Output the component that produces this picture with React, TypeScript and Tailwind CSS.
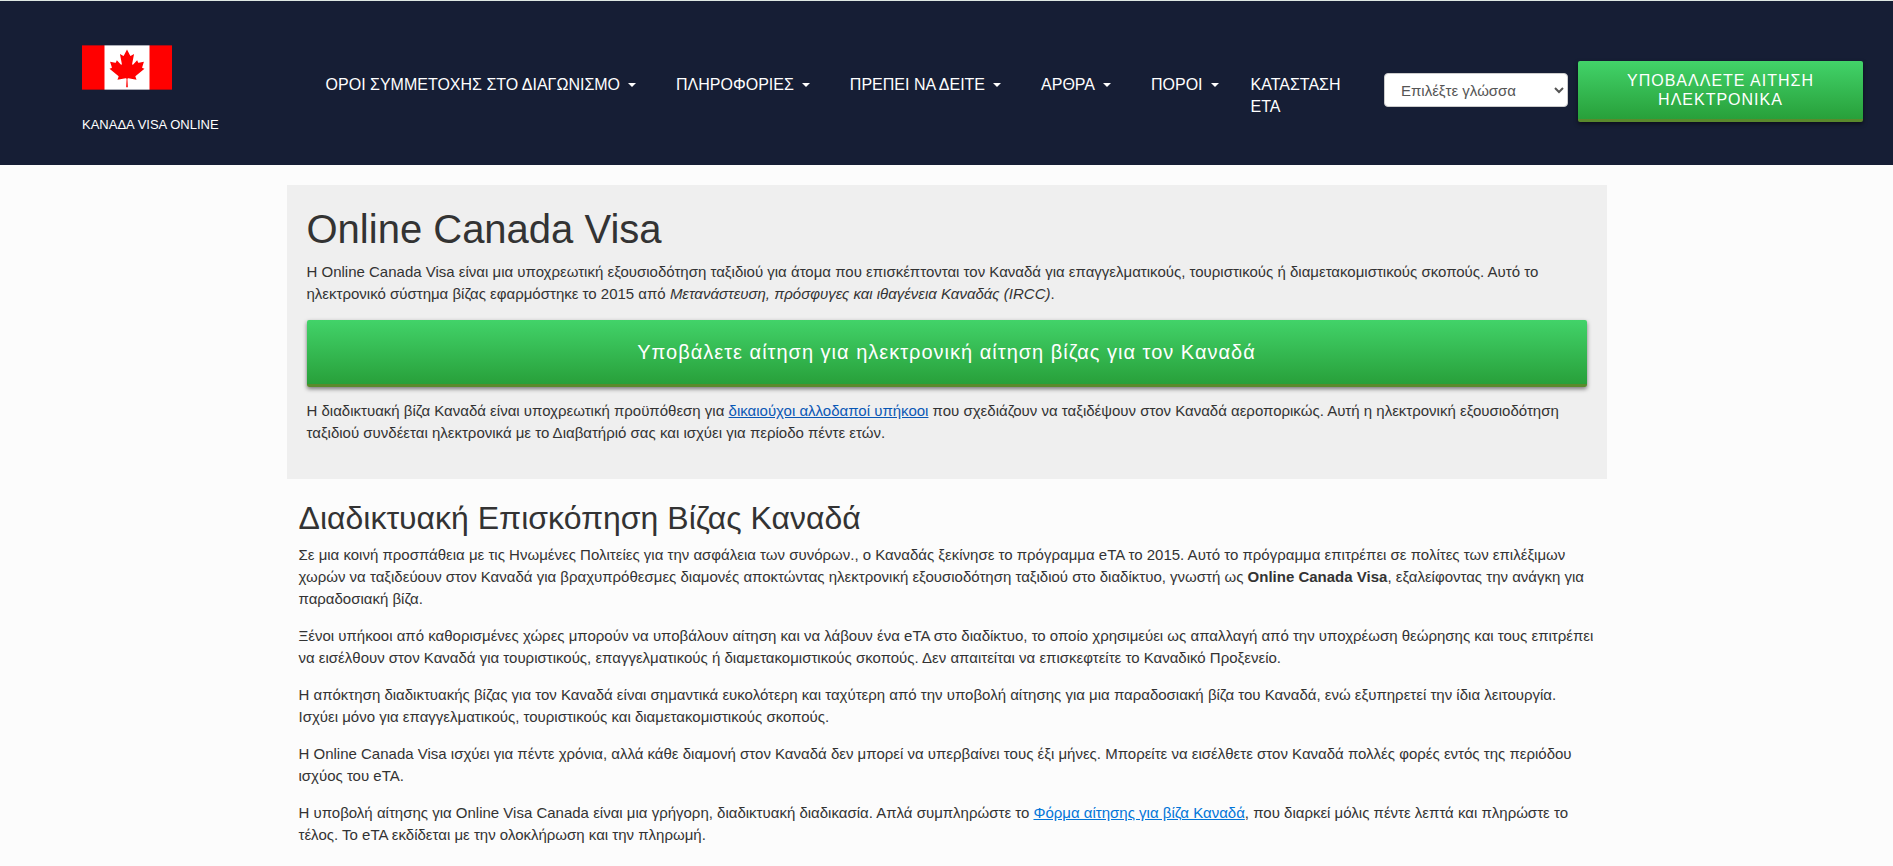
import { useState } from "react";

const menuItems = [
  "ΟΡΟΙ ΣΥΜΜΕΤΟΧΗΣ ΣΤΟ ΔΙΑΓΩΝΙΣΜΟ",
  "ΠΛΗΡΟΦΟΡΙΕΣ",
  "ΠΡΕΠΕΙ ΝΑ ΔΕΙΤΕ",
  "ΑΡΘΡΑ",
  "ΠΟΡΟΙ",
];

const languages = ["Ελληνικά", "English", "Français", "Deutsch", "Español"];

const Flag = () => (
  <svg viewBox="0 0 90 45" className="h-[45px] w-[90px]" aria-hidden="true">
    <rect width="90" height="45" fill="#ff0000" />
    <rect x="22.5" width="45" height="45" fill="#ffffff" />
    <rect width="90" height="0.6" fill="#161e35" opacity="0.6" />
    <rect y="44.4" width="90" height="0.6" fill="#161e35" opacity="0.6" />
    <path
      transform="translate(45 23.2) scale(0.0094)"
      fill="#ff0000"
      d="m-90 2030 45-863a95 95 0 0 0-111-98l-859 151 116-320a65 65 0 0 0-20-73l-941-762 212-99a65 65 0 0 0 34-79l-186-572 542 115a65 65 0 0 0 73-38l105-247 423 454a65 65 0 0 0 111-57l-204-1052 327 189a65 65 0 0 0 91-27l332-652 332 652a65 65 0 0 0 91 27l327-189-204 1052a65 65 0 0 0 111 57l423-454 105 247a65 65 0 0 0 73 38l542-115-186 572a65 65 0 0 0 34 79l212 99-941 762a65 65 0 0 0-20 73l116 320-859-151a95 95 0 0 0-111 98l45 863z"
    />
  </svg>
);

const Caret = () => (
  <svg viewBox="0 0 8 4" className="h-1 w-2" fill="currentColor" aria-hidden="true">
    <path d="M0 0h8L4 4z" />
  </svg>
);

const App = () => {
  const [language, setLanguage] = useState("");

  return (
    <div className="min-h-screen bg-[#fcfcfc] font-['Liberation_Sans',Arial,sans-serif] text-[#333333]">

      {/* HEADER */}
      <header className="flex items-start border-t border-[#dfe8e3] bg-[#161e35] pr-[30px] pb-[29px] pl-[82px] text-white">

        <a href="#home" className="mt-11 mr-[107px] block shrink-0">
          <Flag />
          <span className="mt-6 block text-[13px] leading-[22px]">ΚΑΝΑΔΑ VISA ONLINE</span>
        </a>

        {/* MENU */}
        <nav className="mt-[73px] flex flex-1 items-start gap-8 text-base leading-[22px]">
          <ul className="flex gap-10">
            {menuItems.map((item) => (
              <li key={item}>
                <button type="button" className="flex items-center gap-2 whitespace-nowrap">
                  {item}
                  <Caret />
                </button>
              </li>
            ))}
          </ul>
          <a href="#status" className="w-[100px]">ΚΑΤΑΣΤΑΣΗ ΕΤΑ</a>
        </nav>

        {/* LANGUAGE */}
        <select
          aria-label="Επιλέξτε γλώσσα"
          className="mt-[72px] mr-[10px] h-[34px] w-[184px] shrink-0 rounded-[4px] border border-[#cccccc] bg-white pl-3 text-[15px] text-[#555555]"
          value={language}
          onChange={(e) => setLanguage(e.target.value)}
        >
          <option value="">Επιλέξτε γλώσσα</option>
          {languages.map((l) => (
            <option key={l} value={l}>{l}</option>
          ))}
        </select>

        <a
          href="#apply"
          className="mt-[60px] flex h-[61px] w-[285px] shrink-0 items-center justify-center rounded-[2px] border-b-[3px] border-[#5a8a2c] bg-linear-to-b from-[#42d369] to-[#28a03a] px-10 text-center text-base leading-[19px] tracking-[1px] shadow-[0_2px_4px_rgba(0,0,0,0.5)]"
        >
          ΥΠΟΒΑΛΛΕΤΕ ΑΙΤΗΣΗ ΗΛΕΚΤΡΟΝΙΚΑ
        </a>
      </header>

      <main className="mx-auto mt-5 max-w-[1320px] text-[15px] leading-[22px]">

        {/* INTRO */}
        <section className="bg-[#efefef] px-5 pt-5 pb-[35px]">
          <h1 className="mb-2 text-[40px] leading-[48px]">Online Canada Visa</h1>
          <p>
            Η Online Canada Visa είναι μια υποχρεωτική εξουσιοδότηση ταξιδιού για άτομα που επισκέπτονται τον Καναδά για επαγγελματικούς, τουριστικούς ή διαμετακομιστικούς σκοπούς. Αυτό το ηλεκτρονικό σύστημα βίζας εφαρμόστηκε το 2015 από <em>Μετανάστευση, πρόσφυγες και ιθαγένεια Καναδάς (IRCC)</em>.
          </p>
          <a
            href="#apply"
            className="mt-[15px] mb-[13px] flex h-[67px] items-center justify-center rounded-[2px] border-b-[3px] border-[#5a8a2c] bg-linear-to-b from-[#42d369] to-[#28a03a] text-xl tracking-[1px] text-white shadow-[0_2px_4px_rgba(0,0,0,0.5)]"
          >
            Υποβάλετε αίτηση για ηλεκτρονική αίτηση βίζας για τον Καναδά
          </a>
          <p>
            Η διαδικτυακή βίζα Καναδά είναι υποχρεωτική προϋπόθεση για{" "}
            <a href="#eligible" className="text-[#0a58b5] underline">δικαιούχοι αλλοδαποί υπήκοοι</a>{" "}
            που σχεδιάζουν να ταξιδέψουν στον Καναδά αεροπορικώς. Αυτή η ηλεκτρονική εξουσιοδότηση ταξιδιού συνδέεται ηλεκτρονικά με το Διαβατήριό σας και ισχύει για περίοδο πέντε ετών.
          </p>
        </section>

        {/* OVERVIEW */}
        <section className="flex flex-col gap-[15px] px-3 pt-5">
          <h2 className="-mb-2 text-[32px] leading-[38px]">Διαδικτυακή Επισκόπηση Βίζας Καναδά</h2>
          <p>
            Σε μια κοινή προσπάθεια με τις Ηνωμένες Πολιτείες για την ασφάλεια των συνόρων., ο Καναδάς ξεκίνησε το πρόγραμμα eTA το 2015. Αυτό το πρόγραμμα επιτρέπει σε πολίτες των επιλέξιμων χωρών να ταξιδεύουν στον Καναδά για βραχυπρόθεσμες διαμονές αποκτώντας ηλεκτρονική εξουσιοδότηση ταξιδιού στο διαδίκτυο, γνωστή ως <strong>Online Canada Visa</strong>, εξαλείφοντας την ανάγκη για παραδοσιακή βίζα.
          </p>
          <p>
            Ξένοι υπήκοοι από καθορισμένες χώρες μπορούν να υποβάλουν αίτηση και να λάβουν ένα eTA στο διαδίκτυο, το οποίο χρησιμεύει ως απαλλαγή από την υποχρέωση θεώρησης και τους επιτρέπει να εισέλθουν στον Καναδά για τουριστικούς, επαγγελματικούς ή διαμετακομιστικούς σκοπούς. Δεν απαιτείται να επισκεφτείτε το Καναδικό Προξενείο.
          </p>
          <p>
            Η απόκτηση διαδικτυακής βίζας για τον Καναδά είναι σημαντικά ευκολότερη και ταχύτερη από την υποβολή αίτησης για μια παραδοσιακή βίζα του Καναδά, ενώ εξυπηρετεί την ίδια λειτουργία. Ισχύει μόνο για επαγγελματικούς, τουριστικούς και διαμετακομιστικούς σκοπούς.
          </p>
          <p>
            Η Online Canada Visa ισχύει για πέντε χρόνια, αλλά κάθε διαμονή στον Καναδά δεν μπορεί να υπερβαίνει τους έξι μήνες. Μπορείτε να εισέλθετε στον Καναδά πολλές φορές εντός της περιόδου ισχύος του eTA.
          </p>
          <p>
            Η υποβολή αίτησης για Online Visa Canada είναι μια γρήγορη, διαδικτυακή διαδικασία. Απλά συμπληρώστε το{" "}
            <a href="#form" className="text-[#0275d8] underline">Φόρμα αίτησης για βίζα Καναδά</a>
            , που διαρκεί μόλις πέντε λεπτά και πληρώστε το τέλος. Το eTA εκδίδεται με την ολοκλήρωση και την πληρωμή.
          </p>
        </section>
      </main>
    </div>
  );
};

export default App;
